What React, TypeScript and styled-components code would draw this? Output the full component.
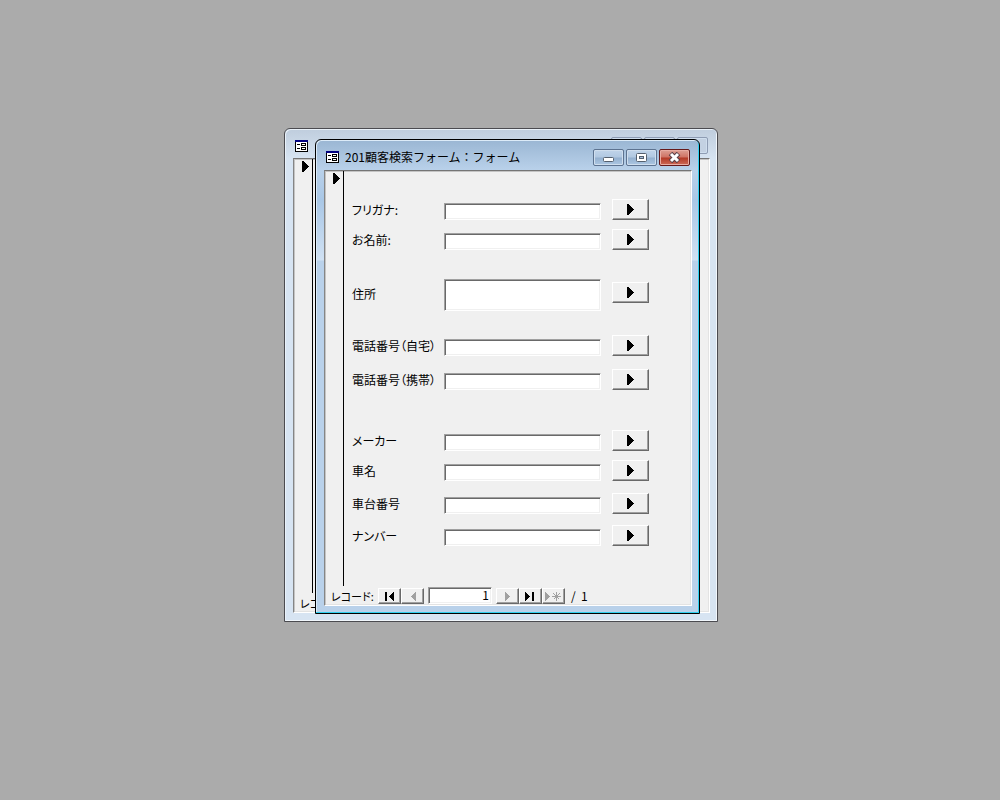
import React from "react";
import styled, { createGlobalStyle } from "styled-components";

const GlobalStyle = createGlobalStyle`
  *, *::before, *::after { box-sizing: border-box; }
  body {
    margin: 0;
    background: #ababab;
    color: #000;
    font: 12px/16px "Noto Sans CJK JP", sans-serif;
  }
  button, input, textarea { font: inherit; color: inherit; border-radius: 0; }
`;

const Desktop = styled.main`
  position: relative;
  min-height: 100vh;
`;

const Window = styled.section<{ $active?: boolean }>`
  position: absolute;
  left: ${(p) => (p.$active ? "calc(50% - 185px)" : "calc(50% - 216px)")};
  top: ${(p) => (p.$active ? 139 : 128)}px;
  width: ${(p) => (p.$active ? 385 : 434)}px;
  height: ${(p) => (p.$active ? 475 : 494)}px;
  display: flex;
  flex-direction: column;
  padding: ${(p) => (p.$active ? "0 7px 7px 8px" : "0 7px 8px 8px")};
  border: 1px solid ${(p) => (p.$active ? "#000" : "#4b4b50")};
  border-radius: 6px 6px 0 0;
  background: ${(p) =>
    p.$active
      ? "linear-gradient(#9ab6d3, #b9d1ea 30px, #a9c7e6 60px, #d0e1f3 120px, #b9d1ea 121px)"
      : "linear-gradient(#bfcddd, #d7e4f2 30px)"};
  box-shadow: ${(p) =>
    p.$active
      ? "inset -1px -1px #2fd0f0, inset 1px 1px #dcebf8"
      : "inset 1px 1px #e9f1f9, inset -1px -1px #f2f7fc"};
`;

const TitleBar = styled.header<{ $active?: boolean }>`
  display: flex;
  align-items: center;
  gap: 6px;
  height: ${(p) => (p.$active ? 30 : 29)}px;
  padding: ${(p) => (p.$active ? "4px 2px 0 2px" : "4px 2px 0 2px")};
`;

const Title = styled.h1`
  flex: 1;
  margin: 0;
  font-size: 12px;
  font-weight: 400;
  line-height: 16px;
  white-space: nowrap;
`;

const Controls = styled.div`
  display: flex;
  gap: 2px;
  margin-left: auto;
`;

const ControlButton = styled.button<{ $kind: "normal" | "close" | "idle" }>`
  display: grid;
  place-items: center;
  width: 31px;
  height: 17px;
  padding: 0;
  border: 1px solid
    ${(p) => (p.$kind === "close" ? "#65191a" : p.$kind === "idle" ? "#8e9cb3" : "#5d7390")};
  border-radius: 2px;
  background: ${(p) =>
    p.$kind === "close"
      ? "linear-gradient(#dda094, #cf7365 7px, #b33a27 8px, #cd6b58)"
      : p.$kind === "idle"
        ? "#c3d1e2"
        : "linear-gradient(#c0d4ea, #b1c8e1 7px, #94b0cf 8px, #acc7e2)"};
  box-shadow: inset 0 0 0 1px ${(p) => (p.$kind === "close" ? "#e9aca2" : "#cfdeee")};
`;

const Client = styled.div`
  flex: 1;
  display: flex;
  flex-direction: column;
  min-height: 0;
  border: 1px solid;
  border-color: #757575 #fff #fff #858585;
  background: #f0f0f0;
  box-shadow: inset 1px 1px #c4c4c4, inset -1px -1px #e3e3e3;
  overflow: hidden;
`;

const Body = styled.div`
  flex: 1;
  display: flex;
`;

const Selector = styled.div`
  display: flex;
  align-items: flex-start;
  width: 19px;
  padding: 2px 0 0 8px;
  border-right: 1px solid #000;
`;

const Form = styled.form`
  flex: 1;
  padding: 28px 0 0 8px;
`;

const Row = styled.div<{ $before: number; $tall?: boolean }>`
  display: grid;
  grid-template-columns: 92px 157px 48px;
  align-items: ${(p) => (p.$tall ? "center" : "end")};
  margin-top: ${(p) => p.$before}px;

  > button {
    justify-self: end;
    ${(p) => p.$tall && "align-self: start; margin-top: 3px;"}
  }
`;

const Label = styled.label`
  padding-bottom: 2px;
  white-space: nowrap;
  font-feature-settings: "palt";
`;

const sunken = `
  display: block;
  width: 100%;
  padding: 1px 3px;
  border: 1px solid;
  border-color: #a0a0a0 #fff #fff #a0a0a0;
  background: #fff;
  box-shadow: inset 1px 1px #696969, inset -1px -1px #f0f0f0;
  outline: none;
`;

const TextBox = styled.input`
  ${sunken}
  height: 17px;
`;

const TextArea = styled.textarea`
  ${sunken}
  height: 32px;
  resize: none;
`;

const RaisedButton = styled.button<{ $small?: boolean }>`
  display: grid;
  place-items: center;
  width: ${(p) => (p.$small ? 23 : 37)}px;
  height: ${(p) => (p.$small ? 16 : 21)}px;
  padding: 0 1px 0 0;
  border: 1px solid;
  border-color: #fff #696969 #696969 #fff;
  background: #f0f0f0;
  box-shadow: inset -1px -1px #a0a0a0;
`;

const RecordBar = styled.nav`
  display: flex;
  align-items: flex-end;
  height: 18px;
  margin-bottom: 1px;
  padding-left: 6px;
`;

const RecordLabel = styled.label`
  width: 47px;
  font-size: 11px;
  font-feature-settings: "palt";
  white-space: nowrap;
`;

const RecordNumber = styled(TextBox)`
  width: 64px;
  margin: 0 4px;
  padding: 0 2px 2px;
  text-align: right;
`;

const Total = styled.span`
  margin-left: 6px;
  white-space: pre;
`;

const FormIcon = () => (
  <svg width="13" height="12" viewBox="0 0 13 12" shapeRendering="crispEdges" aria-hidden="true">
    <path fill="#fff" d="M0 0h13v12H0z" />
    <path fill="#000" d="M0 0h1v12H0zM12 0h1v12h-1zM0 11h13v1H0z" />
    <path fill="#000080" d="M0 0h13v2H0z" />
    <path fill="#000" d="M2 4h3v1H2zM2 8h3v1H2zM6 3h5v3H6zM6 7h5v3H6z" />
    <path fill="#fff" d="M7 4h3v1H7zM7 8h3v1H7z" />
  </svg>
);

const Triangle = () => (
  <svg width="7" height="11" viewBox="0 0 7 11" shapeRendering="crispEdges" aria-hidden="true">
    <path d="M0 0h2v1h1v1h1v1h1v1h1v1h1v1H6v1H5v1H4v1H3v1H2v1H0z" />
  </svg>
);

type NavKind = "first" | "previous" | "next" | "last" | "new";

const navShapes: Record<NavKind, React.ReactNode> = {
  first: <path d="M1 1h2v9H1zM10 1v9H9V9H8V8H7V7H6V6H5V5h1V4h1V3h1V2h1V1z" />,
  previous: <path fill="#a0a0a0" d="M9 1v9H8V9H7V8H6V7H5V6H4V5h1V4h1V3h1V2h1V1z" />,
  next: <path fill="#a0a0a0" d="M3 1v9h1V9h1V8h1V7h1V6h1V5H7V4H6V3H5V2H4V1z" />,
  last: <path d="M0 1v9h1V9h1V8h1V7h1V6h1V5H4V4H3V3H2V2H1V1zM7 1h2v9H7z" />,
  new: (
    <>
      <path fill="#a0a0a0" d="M-3 1v9h1V9h1V8h1V7h1V6h1V5H1V4H0V3h-1V2h-1V1z" />
      <path stroke="#a0a0a0" d="M8.500 1v9M4 5.500h9M5.500 2.500l6 6M11.500 2.500l-6 6" />
    </>
  ),
};

const NavButton = ({ kind, label }: { kind: NavKind; label: string }) => (
  <RaisedButton type="button" $small aria-label={label}>
    <svg width="11" height="11" viewBox="0 0 11 11" overflow="visible" shapeRendering="crispEdges" aria-hidden="true">
      {navShapes[kind]}
    </svg>
  </RaisedButton>
);

const WindowControls = ({ idle }: { idle?: boolean }) => (
  <Controls>
    <ControlButton type="button" $kind={idle ? "idle" : "normal"} aria-label="最小化">
      <svg width="11" height="9" aria-hidden="true">
        <rect x="0.500" y="4.500" width="10" height="4" rx="1" fill="#fff" stroke="#55606e" />
      </svg>
    </ControlButton>
    <ControlButton type="button" $kind={idle ? "idle" : "normal"} aria-label="最大化">
      <svg width="11" height="9" aria-hidden="true">
        <rect x="0.500" y="0.500" width="10" height="8" rx="1" fill="#fff" stroke="#55606e" />
        <rect x="3.500" y="3.500" width="4" height="2" fill="#a8c0dc" stroke="#55606e" />
      </svg>
    </ControlButton>
    <ControlButton type="button" $kind={idle ? "idle" : "close"} aria-label="閉じる">
      <svg width="13" height="11" aria-hidden="true">
        <path d="M2.500 1.500L10.500 9.500M10.500 1.500L2.500 9.500" stroke="#584048" strokeWidth="5" />
        <path d="M3 2L10 9M10 2L3 9" stroke="#fff" strokeWidth="3" />
      </svg>
    </ControlButton>
  </Controls>
);

const fields = [
  { id: "kana", label: "フリガナ:", before: 0 },
  { id: "name", label: "お名前:", before: 9 },
  { id: "address", label: "住所", before: 29, tall: true },
  { id: "home", label: "電話番号（自宅）", before: 24 },
  { id: "mobile", label: "電話番号（携帯）", before: 13 },
  { id: "maker", label: "メーカー", before: 40 },
  { id: "car", label: "車名", before: 9 },
  { id: "chassis", label: "車台番号", before: 12 },
  { id: "plate", label: "ナンバー", before: 11 },
];

export default function App() {
  return (
    <>
      <GlobalStyle />
      <Desktop>
        <Window aria-hidden="true">
          <TitleBar>
            <FormIcon />
            <WindowControls idle />
          </TitleBar>
          <Client>
            <Body>
              <Selector><Triangle /></Selector>
            </Body>
            <RecordBar>
              <RecordLabel as="span">レコ</RecordLabel>
            </RecordBar>
          </Client>
        </Window>
        <Window $active>
          <TitleBar $active>
            <FormIcon />
            <Title>201顧客検索フォーム：フォーム</Title>
            <WindowControls />
          </TitleBar>
          <Client>
            <Body>
              <Selector><Triangle /></Selector>
              <Form>
                {fields.map((f) => (
                  <Row key={f.id} $before={f.before} $tall={f.tall}>
                    <Label htmlFor={f.id}>{f.label}</Label>
                    {f.tall ? <TextArea id={f.id} /> : <TextBox id={f.id} />}
                    <RaisedButton type="button" aria-label={`${f.label} 検索`}>
                      <Triangle />
                    </RaisedButton>
                  </Row>
                ))}
              </Form>
            </Body>
            <RecordBar>
              <RecordLabel htmlFor="record">レコード:</RecordLabel>
              <NavButton kind="first" label="先頭" />
              <NavButton kind="previous" label="前" />
              <RecordNumber id="record" defaultValue="1" />
              <NavButton kind="next" label="次" />
              <NavButton kind="last" label="最後" />
              <NavButton kind="new" label="新規" />
              <Total>/  1</Total>
            </RecordBar>
          </Client>
        </Window>
      </Desktop>
    </>
  );
}
